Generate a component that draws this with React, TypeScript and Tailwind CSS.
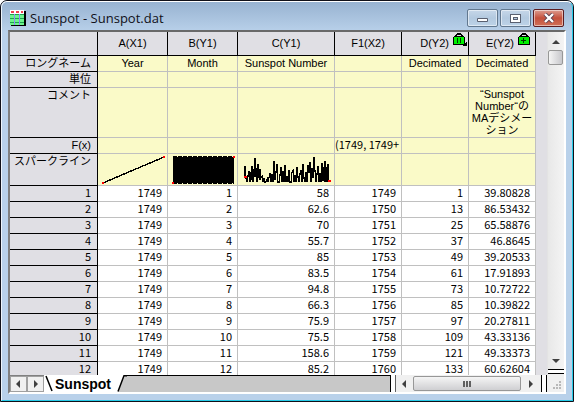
import type { ReactNode } from "react";

const numberFont = "font-['Noto_Sans_CJK_JP','Liberation_Sans',sans-serif] text-[11px] leading-[13px]";
const labelFont = "font-['Liberation_Sans','Noto_Sans_CJK_JP',sans-serif] text-[11px] leading-[15px]";

const rows = [
  ["1749", "1", "58", "1749", "1", "39.80828"],
  ["1749", "2", "62.6", "1750", "13", "86.53432"],
  ["1749", "3", "70", "1751", "25", "65.58876"],
  ["1749", "4", "55.7", "1752", "37", "46.8645"],
  ["1749", "5", "85", "1753", "49", "39.20533"],
  ["1749", "6", "83.5", "1754", "61", "17.91893"],
  ["1749", "7", "94.8", "1755", "73", "10.72722"],
  ["1749", "8", "66.3", "1756", "85", "10.39822"],
  ["1749", "9", "75.9", "1757", "97", "20.27811"],
  ["1749", "10", "75.5", "1758", "109", "43.33136"],
  ["1749", "11", "158.6", "1759", "121", "49.33373"],
  ["1749", "12", "85.2", "1760", "133", "60.62604"],
];

function Lock({ kind }: { kind: "pause" | "plus" }) {
  return (
    <svg width="14" height="13" viewBox="0 0 14 13" shapeRendering="crispEdges" aria-hidden="true">
      <path d="M4 0h4v1h1v1h1v2H8V2H4v2H2V2h1V1h1z" fill="#000" />
      <path d="M1 3h10v1h1v8H0V4h1z" fill="#000" />
      <path d="M1 4h10v7H1z" fill="#00f000" />
      {kind === "pause" ? (
        <>
          <path d="M4 5h1v5H4zM7 5h1v5H7z" fill="#003800" />
          <path d="M14 9v4h-4v-1h2v-2h1V9z" fill="#000" />
        </>
      ) : (
        <path d="M5 5h1v2h2v1H6v2H5V8H3V7h2z" fill="#003800" />
      )}
    </svg>
  );
}

function ColumnHead({ children, lock }: { children: ReactNode; lock?: "pause" | "plus" }) {
  return (
    <th scope="col" className="border-r border-b border-black bg-[#e0dfe4] p-0 font-normal">
      <div className={`flex h-[23px] items-center gap-1 ${lock ? "justify-end pr-px" : "justify-center"}`}>
        <span>{children}</span>
        {lock && (
          <span className={lock === "plus" ? "pr-[2px] pb-2" : "pb-2"}>
            <Lock kind={lock} />
          </span>
        )}
      </div>
    </th>
  );
}

function MetaRow({ label, height, cells }: { label: string; height: string; cells: ReactNode[] }) {
  return (
    <tr className={height}>
      <th scope="row" className="border-r border-b border-black bg-[#e0dfe4] p-0 pr-[6px] text-right align-top font-normal">
        {label}
      </th>
      {cells.map((cell, i) => (
        <td key={i} className="border-r border-b border-[#c0c0c0] bg-[#fafac8] p-0 text-center align-top whitespace-nowrap">
          {cell}
        </td>
      ))}
    </tr>
  );
}

function YearLine() {
  return (
    <svg className="block" width="69" height="31" viewBox="0 0 69 31" shapeRendering="crispEdges">
      <path d="M5 29L66 3" stroke="#000" strokeWidth="1.4" />
      <path d="M4 28h2v2H4zM65 2h2v2h-2z" fill="#f00" />
    </svg>
  );
}

function MonthBlock() {
  return (
    <svg className="block" width="69" height="31" viewBox="0 0 69 31" shapeRendering="crispEdges">
      <path d="M5 3h61v26H5z" fill="#000" />
      <path d="M5 2.5h61M5 29.5h61" stroke="#000" strokeDasharray="4 1" />
      <path d="M4 28h2v2H4zM65 2h2v2h-2z" fill="#f00" />
    </svg>
  );
}

function SunspotLine() {
  return (
    <svg className="block" width="96" height="31" viewBox="0 0 96 31" shapeRendering="crispEdges">
      <path
        d="M7 22L7 12L8 24L9 28L10 22L11 17L12 28L13 18L13 26L14 12L15 28L16 15L17 23L17 4L18 15L19 28L20 10L21 24L22 15L22 26L24 22L25 28L26 24L27 28L28 28L30 23L30 28L32 19L33 28L34 20L35 28L36 7L37 26L38 18L39 10L40 28L41 28L42 21L43 13L44 28L45 17L46 28L47 11L48 28L49 22L50 28L51 16L52 28L53 28L54 18L55 16L56 28L57 21L58 28L59 13L60 23L61 28L62 20L63 16L64 28L65 10L66 24L67 28L68 18L69 28L70 11L71 19L72 8L73 28L74 14L75 24L76 3L77 17L78 28L79 20L80 12L81 28L82 19L83 28L84 9L85 27L86 14L87 7L87 28L88 13L89 28L90 10L91 28"
        fill="none"
        stroke="#000"
        strokeWidth="1.200"
      />
      <path d="M6 22h3v2H6zM90 26h3v2h-3z" fill="#f00" />
    </svg>
  );
}

const arrows = {
  up: "M0 5L4 1L8 5z",
  down: "M0 2L4 6L8 2z",
  left: "M5 0L1 4L5 8z",
  right: "M2 0L6 4L2 8z",
};

function ArrowButton({ dir, label, className }: { dir: keyof typeof arrows; label: string; className: string }) {
  return (
    <button type="button" aria-label={label} className={`flex shrink-0 items-center justify-center ${className}`}>
      <svg width="8" height="8" viewBox="0 0 8 8">
        <path d={arrows[dir]} fill="#404040" />
      </svg>
    </button>
  );
}

function CaptionButton({ label, tone, children }: { label: string; tone: string; children: ReactNode }) {
  return (
    <button
      type="button"
      aria-label={label}
      className={`flex h-[18px] w-[31px] items-center justify-center rounded-[2px] border shadow-[inset_0_0_0_1px_rgba(255,255,255,0.5)] ${tone}`}
    >
      {children}
    </button>
  );
}

const glass = "border-[#62788f] bg-linear-to-b from-[#c6d7e9] via-[#b3c9df] to-[#bdd3e8]";

export default function App() {
  return (
    <main className="overflow-hidden rounded-t-[7px] border border-[#101018] bg-[#b9d1ea] text-black">
      <div className="rounded-t-[6px] border-t border-r border-b border-l border-t-white border-r-[#26cbe8] border-b-[#26cbe8] border-l-[#eef5fb] bg-linear-to-b from-[#98b3d1] to-[#b9d1ea] to-[30px] px-[6px] pb-[6px]">
        <header className="flex h-[28px] items-start justify-between pr-[2px]">
          <div className="flex items-center gap-[3px] pt-[7px]">
            <svg width="17" height="17" viewBox="0 0 17 17" shapeRendering="crispEdges" className="ml-[2px]" aria-hidden="true">
              <path d="M1 1h15v15H1z" fill="#000" />
              <path d="M0 0h14v15H0z" fill="#fff" />
              <path d="M0 4h14v11H0z" fill="#6cf58c" />
              <path d="M1 1h3v2H1zM6 1h3v2H6zM11 1h2v2h-2z" fill="#f04050" />
              <path d="M0 4h14v1H0zM0 8h14v1H0zM0 12h14v1H0z" fill="#20a050" />
              <path d="M4 4h1v11H4zM9 4h1v11H9z" fill="#9088f8" />
            </svg>
            <h1 className="font-['Open_Sans','Noto_Sans',sans-serif] text-[13px] leading-[18px] text-[#101018]">Sunspot - Sunspot.dat</h1>
          </div>
          <div className="flex gap-[2px] pt-[7px]">
            <CaptionButton label="Minimize" tone={glass}>
              <svg width="12" height="6" viewBox="0 0 12 6" className="mt-1">
                <path d="M.5 1.5h10v3H.5z" fill="#fff" stroke="#5a6070" />
              </svg>
            </CaptionButton>
            <CaptionButton label="Maximize" tone={glass}>
              <svg width="12" height="9" viewBox="0 0 12 9" shapeRendering="crispEdges">
                <path d="M.5.5h10v8H.5z" fill="#fff" stroke="#5a6070" />
                <path d="M3.500 3.500h4v2h-4z" fill="#b3c9df" stroke="#5a6070" />
              </svg>
            </CaptionButton>
            <CaptionButton label="Close" tone="border-[#5c1c20] bg-linear-to-b from-[#dc9c90] via-[#c4503c] to-[#d07058]">
              <svg width="12" height="10" viewBox="0 0 12 10">
                <path d="M2 1l8 8M10 1L2 9" stroke="#5a4050" strokeWidth="4" />
                <path d="M2 1l8 8M10 1L2 9" stroke="#fff" strokeWidth="2.400" />
              </svg>
            </CaptionButton>
          </div>
        </header>

        <div className="border-2 border-t-[#696969] border-r-white border-b-white border-l-[#808080] bg-[#f0f0f0]">
          <div className="flex">
            <div className="min-w-0 flex-1 overflow-hidden bg-[#e0dfe4]">
              <table className={`w-full table-fixed border-separate border-spacing-0 ${labelFont}`}>
                <colgroup>
                  <col className="w-[88px]" />
                  <col className="w-[70px]" />
                  <col className="w-[70px]" />
                  <col className="w-[97px]" />
                  <col className="w-[67px]" />
                  <col className="w-[67px]" />
                  <col className="w-[67px]" />
                  <col />
                </colgroup>
                <thead>
                  <tr>
                    <td className="border-r border-b border-black bg-[#e0dfe4] p-0" />
                    <ColumnHead>A(X1)</ColumnHead>
                    <ColumnHead>B(Y1)</ColumnHead>
                    <ColumnHead>C(Y1)</ColumnHead>
                    <ColumnHead>F1(X2)</ColumnHead>
                    <ColumnHead lock="pause">D(Y2)</ColumnHead>
                    <ColumnHead lock="plus">E(Y2)</ColumnHead>
                  </tr>
                </thead>
                <tbody>
                  <MetaRow label="ロングネーム" height="h-[16px]" cells={["Year", "Month", "Sunspot Number", "", "Decimated", "Decimated"]} />
                  <MetaRow label="単位" height="h-[16px]" cells={["", "", "", "", "", ""]} />
                  <MetaRow
                    label="コメント"
                    height="h-[50px]"
                    cells={[
                      "",
                      "",
                      "",
                      "",
                      "",
                      <div key="comment" className="leading-[12px]">
                        “Sunspot
                        <br />
                        Number“の
                        <br />
                        MAデシメー
                        <br />
                        ション
                      </div>,
                    ]}
                  />
                  <MetaRow
                    label="F(x)"
                    height="h-[16px]"
                    cells={["", "", "", <div key="fx" className={`text-left ${numberFont}`}>(1749, 1749+</div>, "", ""]}
                  />
                  <MetaRow
                    label="スパークライン"
                    height="h-[32px]"
                    cells={[<YearLine key="a" />, <MonthBlock key="b" />, <SunspotLine key="c" />, "", "", ""]}
                  />
                  {rows.map((row, r) => (
                    <tr key={r} className={`group h-[16px] last:h-[13px] ${numberFont}`}>
                      <th scope="row" className="border-r border-b border-black bg-[#e0dfe4] p-0 pr-[6px] text-right align-top font-normal group-last:border-b-0">
                        {r + 1}
                      </th>
                      {row.map((value, c) => (
                        <td key={c} className="border-r border-b border-[#c0c0c0] bg-white p-0 pr-[5px] text-right align-top group-last:border-b-0">
                          {value}
                        </td>
                      ))}
                    </tr>
                  ))}
                </tbody>
              </table>
            </div>
            <div className="flex w-[17px] shrink-0 flex-col border-l border-[#e3e3e3] bg-linear-to-r from-[#e8e8e8] to-[#f4f4f4]">
              <ArrowButton dir="up" label="Scroll up" className="h-[18px] pt-1" />
              <div className="mr-px h-[15px] rounded-[2px] border border-[#979797] bg-linear-to-r from-[#f5f5f5] to-[#c8c8cc]" />
              <div className="flex-1" />
              <ArrowButton dir="down" label="Scroll down" className="h-[14px]" />
              <div className="mt-px h-[5px] border-y border-black bg-white" />
              <div className="h-px bg-[#f0f0f0]" />
            </div>
          </div>

          <footer className="flex h-[17px]">
            <div className="flex border-t border-[#808080]">
              <ArrowButton dir="left" label="Previous sheet" className="w-[17px] border border-[#a0a0a0] bg-[#f0f0f0]" />
              <ArrowButton dir="right" label="Next sheet" className="w-[17px] border border-[#a0a0a0] bg-[#f0f0f0]" />
            </div>
            <div className="flex min-w-0 flex-1 border-r border-black bg-[#c8c8c8]">
              <button type="button" className="flex h-full bg-white">
                <svg width="9" height="17" viewBox="0 0 9 17">
                  <path d="M2 1l6 15" stroke="#000" strokeWidth="1.500" />
                </svg>
                <span className="px-[2px] font-['Liberation_Sans',sans-serif] text-[14px] leading-[18px] font-bold">Sunspot</span>
                <svg width="14" height="17" viewBox="0 0 14 17">
                  <path d="M5 17L12 1h2v16z" fill="#c8c8c8" />
                  <path d="M5 16.500L11 .7h3" fill="none" stroke="#000" strokeWidth="1.500" />
                </svg>
              </button>
              <div className="flex-1 border-t border-black" />
            </div>
            <div className="w-[5px] border-r border-[#606060] bg-white" />
            <div className="flex w-[145px] bg-[#f0f0f0]">
              <ArrowButton dir="left" label="Scroll left" className="w-[17px]" />
              <div className="mt-px flex h-[15px] flex-1 items-center justify-center gap-px rounded-[2px] border border-[#979797] bg-linear-to-b from-[#f5f5f5] to-[#cfcfd2]">
                <i className="h-[6px] w-[2px] bg-[#606060]" />
                <i className="h-[6px] w-[2px] bg-[#606060]" />
                <i className="h-[6px] w-[2px] bg-[#606060]" />
              </div>
              <ArrowButton dir="right" label="Scroll right" className="w-[20px]" />
            </div>
            <div className="w-[6px] border-x border-black bg-white" />
            <div className="flex w-[17px] items-end justify-end bg-[#f0f0f0] p-[2px]">
              <svg width="10" height="10" viewBox="0 0 10 10" shapeRendering="crispEdges" aria-hidden="true">
                <path d="M7 1h2v2H7zM4 4h2v2H4zM7 4h2v2H7zM1 7h2v2H1zM4 7h2v2H4zM7 7h2v2H7z" fill="#b8b8b8" />
              </svg>
            </div>
          </footer>
        </div>
      </div>
    </main>
  );
}
